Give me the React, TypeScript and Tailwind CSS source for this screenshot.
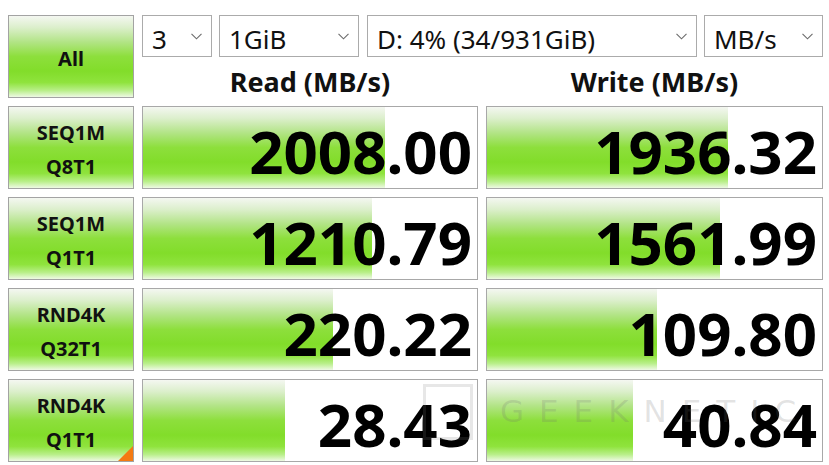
import React from "react";

const green =
  "linear-gradient(to bottom, #f4f7f1 0%, #dcefcc 14%, #b2e486 32%, #8ddf3c 50%, #82dd2a 68%, #8fe33d 82%, #b9ef8a 92%, #eef9e4 100%)";

const font = { fontFamily: '"Noto Sans", "Open Sans", sans-serif' };

function Chevron() {
  return (
    <svg width="11" height="7" viewBox="0 0 11 7" className="shrink-0">
      <polyline points="0.5,0.8 5.5,5.8 10.5,0.8" fill="none" stroke="#6b6b6b" strokeWidth="1.1" />
    </svg>
  );
}

function Combo({ text, w }: { text: string; w: string }) {
  return (
    <div className={`${w} h-[42px] border border-[#ababab] bg-white flex items-center justify-between pl-[9px] pr-[9px]`}>
      <span className="text-[26px] leading-none text-[#111] pt-[5px]">{text}</span>
      <Chevron />
    </div>
  );
}

function LeftButton({ l1, l2, corner }: { l1: string; l2?: string; corner?: boolean }) {
  return (
    <div
      className="relative h-[83px] border border-[#a3a3a3] flex flex-col items-center justify-center font-bold text-[#111]"
      style={{ background: green }}
    >
      {l2 ? (
        <div className="flex flex-col items-center text-[20px] leading-[34px] pt-[4px]">
          <span>{l1}</span>
          <span>{l2}</span>
        </div>
      ) : (
        <span className="text-[20px] leading-none pt-[4px]">{l1}</span>
      )}
      {corner && (
        <div className="absolute right-0 bottom-0 w-0 h-0 border-l-[15px] border-l-transparent border-b-[15px] border-b-[#f47a12]" />
      )}
    </div>
  );
}

function Value({ v, pct }: { v: string; pct: number }) {
  return (
    <div className="relative h-[83px] border border-[#a8a8a8] bg-white">
      <div className="absolute left-0 top-0 bottom-0" style={{ width: `${pct}%`, background: green }} />
      <div className="relative h-full flex items-center justify-end pr-[5px] pt-[7px]">
        <span className="text-[60px] font-bold leading-none text-black">{v}</span>
      </div>
    </div>
  );
}

const rows = [
  { a: "SEQ1M", b: "Q8T1", r: "2008.00", rp: 72.4, w: "1936.32", wp: 71.8 },
  { a: "SEQ1M", b: "Q1T1", r: "1210.79", rp: 68.5, w: "1561.99", wp: 69.6 },
  { a: "RND4K", b: "Q32T1", r: "220.22", rp: 56.9, w: "109.80", wp: 50.8 },
  { a: "RND4K", b: "Q1T1", r: "28.43", rp: 42.5, w: "40.84", wp: 43.6 },
];

export default function App() {
  return (
    <div className="relative w-[829px] h-[465px] bg-white overflow-hidden" style={font}>
      <div className="grid grid-cols-[126px_336px_337px] gap-x-[8px] gap-y-[8px] pl-[8px] pt-[15px]">
        <LeftButton l1="All" />
        <div className="col-span-2 flex flex-col">
          <div className="flex">
            <Combo text="3" w="w-[70px]" />
            <div className="w-[7px]" />
            <Combo text="1GiB" w="w-[140px]" />
            <div className="w-[8px]" />
            <Combo text="D: 4% (34/931GiB)" w="w-[330px]" />
            <div className="w-[7px]" />
            <Combo text="MB/s" w="w-[119px]" />
          </div>
          <div className="flex gap-[8px] h-[41px]">
            <div className="w-[336px] flex items-center justify-center pt-[9px] text-[27px] font-bold text-[#111]">
              Read (MB/s)
            </div>
            <div className="w-[337px] flex items-center justify-center pt-[9px] text-[27px] font-bold text-[#111]">
              Write (MB/s)
            </div>
          </div>
        </div>
        {rows.map((row, i) => (
          <React.Fragment key={i}>
            <LeftButton l1={row.a} l2={row.b} corner={i === 3} />
            <Value v={row.r} pct={row.rp} />
            <Value v={row.w} pct={row.wp} />
          </React.Fragment>
        ))}
      </div>
      <div className="absolute left-[423px] top-[384px] w-[50px] h-[56px] border-[3px] border-[rgba(120,120,120,0.18)] pointer-events-none" />
      <div
        className="absolute left-[500px] top-[388px] text-[31px] whitespace-nowrap text-[rgba(110,110,110,0.2)] pointer-events-none"
        style={{ fontFamily: '"DejaVu Sans", sans-serif' }}
      >
        <span className="tracking-[15px]">GEEKNETI</span>
        <span>C</span>
      </div>
    </div>
  );
}
